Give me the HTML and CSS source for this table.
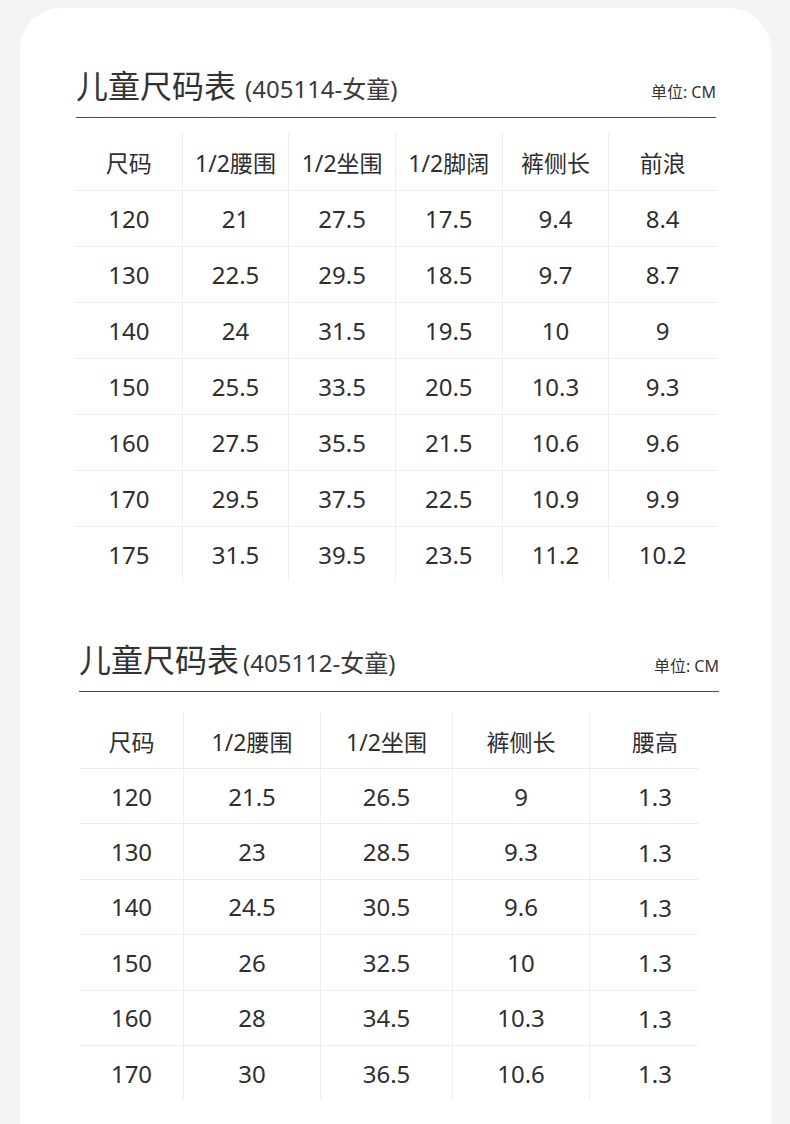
FILE: index.html
```html
<!DOCTYPE html>
<html lang="zh-CN">
<head>
<meta charset="utf-8">
<title>儿童尺码表</title>
<link rel="stylesheet" href="styles.css">
</head>
<body>
<div class="card">
  <section class="sheet sheet-a">
    <header class="sheet-head">
      <h2 class="sheet-title">儿童尺码表<span class="sheet-sub">(405114-女童)</span></h2>
      <span class="unit">单位: CM</span>
    </header>
    <table class="size-table table-a">
      <thead>
        <tr><th>尺码</th><th>1/2腰围</th><th>1/2坐围</th><th>1/2脚阔</th><th>裤侧长</th><th>前浪</th></tr>
      </thead>
      <tbody>
        <tr><td>120</td><td>21</td><td>27.5</td><td>17.5</td><td>9.4</td><td>8.4</td></tr>
        <tr><td>130</td><td>22.5</td><td>29.5</td><td>18.5</td><td>9.7</td><td>8.7</td></tr>
        <tr><td>140</td><td>24</td><td>31.5</td><td>19.5</td><td>10</td><td>9</td></tr>
        <tr><td>150</td><td>25.5</td><td>33.5</td><td>20.5</td><td>10.3</td><td>9.3</td></tr>
        <tr><td>160</td><td>27.5</td><td>35.5</td><td>21.5</td><td>10.6</td><td>9.6</td></tr>
        <tr><td>170</td><td>29.5</td><td>37.5</td><td>22.5</td><td>10.9</td><td>9.9</td></tr>
        <tr><td>175</td><td>31.5</td><td>39.5</td><td>23.5</td><td>11.2</td><td>10.2</td></tr>
      </tbody>
    </table>
  </section>

  <section class="sheet sheet-b">
    <header class="sheet-head">
      <h2 class="sheet-title">儿童尺码表<span class="sheet-sub">(405112-女童)</span></h2>
      <span class="unit">单位: CM</span>
    </header>
    <table class="size-table table-b">
      <colgroup>
        <col class="c1"><col class="c2"><col class="c3"><col class="c4"><col class="c5">
      </colgroup>
      <thead>
        <tr><th>尺码</th><th>1/2腰围</th><th>1/2坐围</th><th>裤侧长</th><th>腰高</th></tr>
      </thead>
      <tbody>
        <tr><td>120</td><td>21.5</td><td>26.5</td><td>9</td><td>1.3</td></tr>
        <tr><td>130</td><td>23</td><td>28.5</td><td>9.3</td><td>1.3</td></tr>
        <tr><td>140</td><td>24.5</td><td>30.5</td><td>9.6</td><td>1.3</td></tr>
        <tr><td>150</td><td>26</td><td>32.5</td><td>10</td><td>1.3</td></tr>
        <tr><td>160</td><td>28</td><td>34.5</td><td>10.3</td><td>1.3</td></tr>
        <tr><td>170</td><td>30</td><td>36.5</td><td>10.6</td><td>1.3</td></tr>
      </tbody>
    </table>
  </section>
</div>
</body>
</html>
```

FILE: styles.css
```css
html, body {
  margin: 0;
  padding: 0;
}

body {
  background: #f4f4f4;
  font-family: "Noto Sans", "Noto Sans CJK SC", sans-serif;
  color: #333;
  overflow: hidden;
}

.card {
  margin: 8px 0 0 20px;
  width: 751px;
  background: #fff;
  border-radius: 42px 42px 0 0;
  padding: 58px 0 80px 56px;
  box-sizing: border-box;
}

.sheet {
  width: 640px;
}

.sheet-b {
  margin: 58px 0 0 3px;
}

.sheet-head {
  display: flex;
  justify-content: space-between;
  align-items: baseline;
  padding-bottom: 8px;
  border-bottom: 1px solid #4a4a4a;
}

.sheet-title {
  margin: 0;
  font-size: 32px;
  font-weight: 400;
  line-height: 40px;
  color: #333;
}

.sheet-sub {
  font-size: 24px;
  color: #3a3a3a;
}

.sheet-a .sheet-sub {
  margin-left: 9px;
}

.sheet-b .sheet-sub {
  margin-left: 4px;
}

.unit {
  font-size: 16px;
  line-height: 20px;
  color: #333;
}

.size-table {
  border-collapse: separate;
  border-spacing: 0;
  table-layout: fixed;
  width: 640px;
  text-align: center;
  color: #2f2f2f;
}

.table-a {
  margin-top: 15px;
}

.table-b {
  margin: 21px 0 0 1px;
}

.size-table th,
.size-table td {
  padding: 0;
  vertical-align: middle;
  border-right: 1px solid #eeeeee;
  border-bottom: 1px solid #ebebeb;
}

.size-table th {
  font-size: 23px;
  font-weight: 400;
}

.size-table td {
  font-size: 24px;
}

.size-table th:last-child,
.size-table td:last-child {
  border-right: 0;
}

.size-table tbody tr:last-child td {
  border-bottom: 0;
}

.table-a th { height: 57px; }
.table-a td { height: 55px; }

.table-b th { height: 55px; }
.table-b td { height: 54.4px; }

.table-b .c1 { width: 104px; }
.table-b .c2 { width: 137px; }
.table-b .c3 { width: 132px; }
.table-b .c4 { width: 137px; }
.table-b .c5 { width: 130px; }

.table-b th:last-child,
.table-b tbody tr:not(:last-child) td:last-child {
  border-bottom: 0;
  background: linear-gradient(#ebebeb, #ebebeb) no-repeat left bottom / 108px 1px;
}
```
